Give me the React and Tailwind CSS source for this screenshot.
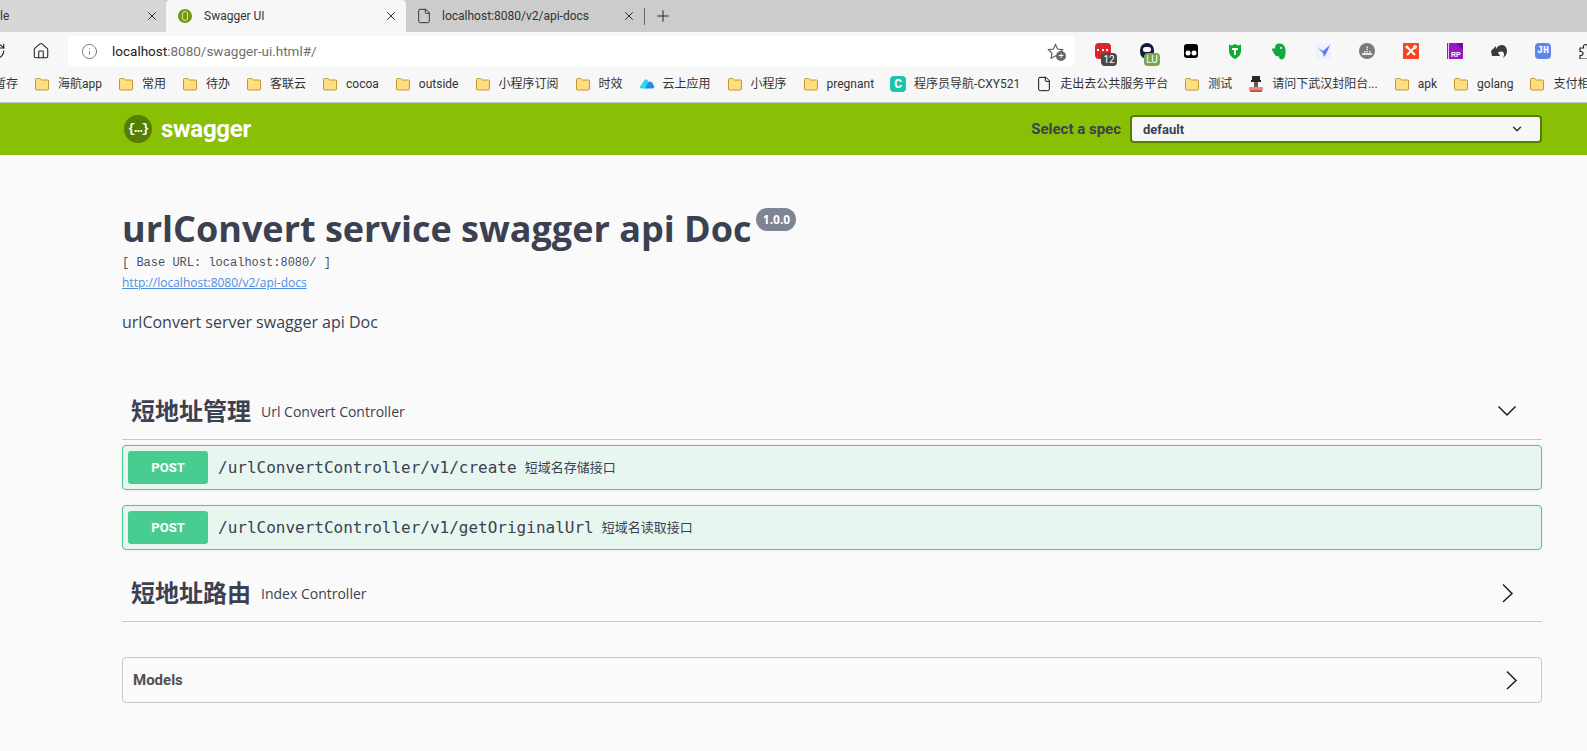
import { ChevronDown, File, Home, Info, Plus, RotateCw, X } from "lucide-react";

const bookmarks = [
  { label: "暂存", icon: "none" },
  { label: "海航app" },
  { label: "常用" },
  { label: "待办" },
  { label: "客联云" },
  { label: "cocoa" },
  { label: "outside" },
  { label: "小程序订阅" },
  { label: "时效" },
  { label: "云上应用", icon: "cloud" },
  { label: "小程序" },
  { label: "pregnant" },
  { label: "程序员导航-CXY521", icon: "c" },
  { label: "走出去公共服务平台", icon: "doc" },
  { label: "测试" },
  { label: "请问下武汉封阳台...", icon: "stamp" },
  { label: "apk" },
  { label: "golang" },
  { label: "支付相关" },
];

function FolderIcon() {
  return (
    <svg width="16" height="16" viewBox="0 0 16 16" className="shrink-0">
      <path
        d="M1.5 3.5a1 1 0 0 1 1-1h3.2l1.6 1.5h6.2a1 1 0 0 1 1 1v8a1 1 0 0 1-1 1h-11a1 1 0 0 1-1-1z"
        fill="#ffdd82"
        stroke="#c4962c"
      />
    </svg>
  );
}

function BookmarkIcon({ type }) {
  if (type === "none") return null;
  if (type === "doc") return <File size={16} strokeWidth={1.4} className="shrink-0 text-black" />;
  if (type === "c") {
    return (
      <span className="flex h-4 w-4 shrink-0 items-center justify-center rounded bg-[#1fc4ad] text-[12px] font-bold text-white">
        C
      </span>
    );
  }
  if (type === "cloud") {
    return (
      <svg width="16" height="16" viewBox="0 0 16 16" className="shrink-0">
        <path d="M1 10.5 5.5 4c1-1 2-1 3 0l2 5-3 3.5H3c-2 0-2.6-1-2-2z" fill="#2fd8e8" />
        <path d="M6 12.5 9 6.500c1-1.500 3-1.500 4 0l2 3.500c.6 1.500-.4 2.500-1.500 2.500z" fill="#1f8cf0" />
      </svg>
    );
  }
  if (type === "stamp") {
    return (
      <svg width="16" height="18" viewBox="0 0 16 18" className="shrink-0">
        <rect x="4" y="1" width="8" height="4" fill="#2a2a2a" />
        <rect x="3" y="5" width="10" height="2" fill="#2a2a2a" />
        <rect x="6" y="7" width="4" height="5" fill="#6b5a50" />
        <rect x="1" y="12" width="14" height="3" rx="1" fill="#e98a8a" />
        <rect x="2" y="15" width="12" height="2" fill="#d84a4a" />
      </svg>
    );
  }
  return <FolderIcon />;
}

function ExtSlot({ children }) {
  return <div className="relative flex h-4 w-4 shrink-0 items-center justify-center">{children}</div>;
}

function ExtensionIcons() {
  return (
    <div className="flex items-center gap-7">
      <ExtSlot>
        <div className="h-4 w-4 rounded-sm bg-[#d9262c]">
          <span className="absolute left-[2px] top-[5px] h-[3px] w-[11px] border-b-2 border-dotted border-white" />
        </div>
        <span className="absolute left-[6px] top-[10px] flex h-[13px] w-4 items-center justify-center rounded-sm bg-[#4a4a4a] text-[10px] leading-none text-white">
          12
        </span>
      </ExtSlot>
      <ExtSlot>
        <div className="h-4 w-[14px] rounded-full bg-[#14203a]">
          <span className="absolute left-[4px] top-[4px] h-[5px] w-2 rounded-full bg-white" />
        </div>
        <span className="absolute left-[5px] top-[10px] flex h-[13px] w-4 items-center justify-center rounded-sm bg-[#76a74f] text-[10px] leading-none text-white">
          LU
        </span>
      </ExtSlot>
      <ExtSlot>
        <svg width="14" height="14" viewBox="0 0 14 14">
          <rect width="14" height="14" rx="3" fill="#000" />
          <circle cx="4" cy="9" r="2.500" fill="#fff" />
          <circle cx="10" cy="9" r="2.500" fill="#fff" />
        </svg>
      </ExtSlot>
      <ExtSlot>
        <svg width="14" height="16" viewBox="0 0 14 16">
          <path d="M1 1.500 4 2.500 7 1l3 1.500 3-1v6.500C13 12 10 14.500 7 16 4 14.500 1 12 1 8z" fill="#0db02b" />
          <path d="M4 5h6v2H8v5H6V7H4z" fill="#fff" />
        </svg>
      </ExtSlot>
      <ExtSlot>
        <svg width="14" height="17" viewBox="0 0 14 17">
          <path d="M3.500 2C5 .3 9 0 11 1.500c2 1.500 3 5 2.500 9-.3 3-1.500 6-4 6-2 0-2.800-1.500-2.200-3.200-2 .6-4-.3-5.300-2.800C1 9 0 7 0 5.500h3z" fill="#12a745" />
          <circle cx="9" cy="5" r="1" fill="#fff" />
        </svg>
      </ExtSlot>
      <ExtSlot>
        <svg width="15" height="16" viewBox="0 0 15 16">
          <rect width="15" height="16" rx="2" fill="#eef1fd" />
          <path d="M2 5 7 8 14 2 11 9 8 14 7 10z" fill="#5b7cf0" />
        </svg>
      </ExtSlot>
      <ExtSlot>
        <svg width="16" height="16" viewBox="0 0 16 16">
          <circle cx="8" cy="8" r="8" fill="#7b7b7b" />
          <path d="M3 10h10v2H3zM5 8h1.500v1.500H5zM7.500 8H9v1.500H7.500zM10 8h1.500v1.500H10zM7.500 5.500H9V7H7.500zM7.500 3.500H9V5H7.500z" fill="#e8e8e8" />
        </svg>
      </ExtSlot>
      <ExtSlot>
        <svg width="16" height="16" viewBox="0 0 16 16">
          <rect width="16" height="16" fill="#f5461f" />
          <path d="M4 12 12 4M4 4l8 8" stroke="#fff" strokeWidth="2" />
          <circle cx="12" cy="4" r="2" fill="#fff" />
          <circle cx="4" cy="4" r="1.500" fill="#fff" />
        </svg>
      </ExtSlot>
      <ExtSlot>
        <svg width="16" height="16" viewBox="0 0 16 16">
          <rect width="16" height="16" fill="#9a17c4" />
          <path d="M9 0h7v7z" fill="#6d0e9c" />
          <rect x="1" width="1" height="16" fill="#e8c8f5" />
          <text x="4" y="14" fontSize="7" fontWeight="700" fill="#fff" fontFamily="Liberation Sans">RP</text>
        </svg>
      </ExtSlot>
      <ExtSlot>
        <svg width="16" height="15" viewBox="0 0 16 15">
          <path d="M0 7 5 2v3c1-2 3-4 6-4 3 0 5 3 5 6 0 3-1.500 5-4 7 1-2 1.500-4 .5-5.500C11.500 7 9 7 7 8.500L9 12H1z" fill="#3b3b3b" />
        </svg>
      </ExtSlot>
      <span className="flex h-4 w-4 shrink-0 items-center justify-center rounded-sm bg-[#5c86ee] font-['Liberation_Mono',monospace] text-[10px] font-bold leading-none text-white">
        JH
      </span>
      <svg width="16" height="16" viewBox="0 0 16 16" fill="none" stroke="#222" strokeWidth="1.200" className="shrink-0">
        <path d="M1 5h3.500V3.500a2 2 0 0 1 4 0V5H12v3.500h1.500a2 2 0 0 1 0 4H12V16H1v-3.500h1a2 2 0 0 0 0-4H1z" />
      </svg>
    </div>
  );
}

function Tab({ className, icon, title }) {
  return (
    <div className={`flex h-8 items-center rounded-t ${className}`}>
      {icon}
      <span className="truncate text-[12px] text-[#333]">{title}</span>
      <X size={14} strokeWidth={1.600} className="ml-auto shrink-0 text-[#222]" />
    </div>
  );
}

function BrowserChrome() {
  return (
    <div className="font-['Roboto','Noto_Sans_CJK_SC',sans-serif]">
      <div className="flex h-8 items-center overflow-hidden bg-[#cccccc]">
        <Tab className="w-[166px] justify-start bg-[#d6d6d6] pr-[7px]" title="le" />
        <Tab
          className="w-[240px] bg-[#f7f7f7] pl-3 pr-[8px]"
          icon={
            <span className="mr-3 flex h-[14px] w-[14px] shrink-0 items-center justify-center rounded-full bg-[#6f9a12]">
              <span className="h-[10px] w-[6px] rounded-full border border-[#d8e6b8]" />
            </span>
          }
          title="Swagger UI"
        />
        <Tab
          className="w-[234px] pl-[10px] pr-[4px]"
          icon={<File size={16} strokeWidth={1.300} className="mr-[10px] shrink-0 text-[#222]" />}
          title="localhost:8080/v2/api-docs"
        />
        <span className="ml-[4px] h-[17px] w-px bg-[#666]" />
        <Plus size={18} strokeWidth={1.300} className="ml-[9px] text-[#222]" />
      </div>

      <div className="flex h-[34px] items-center overflow-hidden bg-[#f7f7f7] pt-[4px]">
        <RotateCw size={18} strokeWidth={1.500} className="-ml-[12px] shrink-0 text-[#222]" />
        <Home size={18} strokeWidth={1.400} className="ml-[26px] shrink-0 text-[#222]" />
        <div className="ml-[18px] flex h-[30px] w-[1007px] shrink-0 items-center rounded bg-white pl-[13px] pr-[12px]">
          <Info size={17} strokeWidth={1.200} className="shrink-0 text-[#666]" />
          <span className="ml-[14px] text-[13.500px] text-[#222]">
            localhost<span className="text-[#6e6e6e]">:8080/swagger-ui.html#/</span>
          </span>
          <span className="relative ml-auto h-4 w-4">
            <svg width="17" height="17" viewBox="0 0 24 24" fill="none" stroke="#555" strokeWidth="1.500">
              <path d="M12 2l3 6.500 7 1-5 5 1.200 7L12 18l-6.200 3.500L7 14.500l-5-5 7-1z" />
            </svg>
            <span className="absolute left-[9px] top-[8px] flex h-[10px] w-[10px] items-center justify-center rounded-full bg-[#666] text-[9px] leading-none text-white">
              +
            </span>
          </span>
        </div>
        <div className="ml-[20px] shrink-0">
          <ExtensionIcons />
        </div>
      </div>

      <div className="flex h-[37px] items-center gap-4 overflow-hidden border-b border-[#c6c6c6] bg-[#f7f7f7]">
        {bookmarks.map((b, i) => (
          <div key={b.label} className={`flex shrink-0 items-center gap-2 ${i === 0 ? "-ml-[6px]" : ""}`}>
            <BookmarkIcon type={b.icon} />
            <span className="whitespace-nowrap text-[12px] leading-4 text-[#333]">{b.label}</span>
          </div>
        ))}
      </div>
    </div>
  );
}

function SwaggerBar() {
  return (
    <div className="flex h-[52px] items-center bg-[#89bf04] pl-[124px] pr-[45px] font-['Roboto','Noto_Sans',sans-serif]">
      <span className="flex h-7 w-7 items-center justify-center rounded-full bg-[#547f00] font-['Liberation_Mono',monospace] text-[13px] font-bold tracking-[-1px] text-white">
        {"{…}"}
      </span>
      <span className="ml-[9px] text-[24px] font-bold leading-none tracking-[-0.3px] text-white">swagger</span>
      <span className="ml-auto text-[15px] font-bold text-[#3b4151]">Select a spec</span>
      <div className="ml-[9px] flex h-[28px] w-[412px] items-center justify-between rounded border-2 border-[#547f00] bg-[#f7f7f7] pl-[11px] pr-[16px]">
        <span className="pt-px text-[13px] font-bold text-[#3b4151]">default</span>
        <ChevronDown size={14} strokeWidth={2.500} className="text-[#333]" />
      </div>
    </div>
  );
}

function TagHeader({ name, desc, open }) {
  return (
    <div className="flex h-[57px] items-center border-b border-[#c8c8cb] pl-[9px] pr-[26px]">
      <h3 className="text-[24px] font-bold leading-none text-[#3b4151]">{name}</h3>
      <span className="ml-[10px] text-[14px] text-[#3b4151]">{desc}</span>
      <span className="ml-auto">
        {open ? (
          <svg width="20" height="20" viewBox="0 0 20 20" fill="none" stroke="#1f1f1f" strokeWidth="1.500" className="-mr-[1px]">
            <path d="M1.500 5.500 10 14l8.500-8.500" />
          </svg>
        ) : (
          <svg width="20" height="20" viewBox="0 0 20 20" fill="none" stroke="#1f1f1f" strokeWidth="1.500" className="-mr-[1px]">
            <path d="M6 1.500 15 10.500 6 19" />
          </svg>
        )}
      </span>
    </div>
  );
}

function PostRow({ path, desc, className }) {
  return (
    <div className={`flex h-[45px] items-center rounded border border-[#49cc90] bg-[#e8f6f0] pl-[5px] shadow-[0_0_3px_rgba(0,0,0,0.08)] ${className}`}>
      <span className="flex h-[33px] w-[80px] items-center justify-center rounded-[3px] bg-[#49cc90] font-['Roboto',sans-serif] text-[13px] font-bold text-white">
        POST
      </span>
      <span className="ml-[10px] font-['DejaVu_Sans_Mono',monospace] text-[16px] leading-none text-[#3b4151]">{path}</span>
      <span className="ml-[8px] text-[13px] text-[#3b4151]">{desc}</span>
    </div>
  );
}

export default function App() {
  return (
    <div className="h-[751px] overflow-hidden bg-[#fafafa] font-['Open_Sans','Noto_Sans_CJK_SC',sans-serif]">
      <BrowserChrome />
      <SwaggerBar />

      <main className="ml-[122px] mr-[45px]">
        <section className="pt-[52px]">
          <div className="flex items-start">
            <h2 className="text-[36px] font-bold leading-[44px] text-[#3b4151]">urlConvert service swagger api Doc</h2>
            <span className="ml-[5px] mt-[1px] flex h-[23px] w-[40px] items-center justify-center rounded-full bg-[#7d8492] text-[12px] font-bold text-white">
              1.0.0
            </span>
          </div>
          <p className="mt-[4px] font-['Liberation_Mono',monospace] text-[12px] leading-4 text-[#4a5060]">
            [ Base URL: localhost:8080/ ]
          </p>
          <a className="mt-[4px] block text-[12px] leading-4 text-[#4990e2] underline">http://localhost:8080/v2/api-docs</a>
          <p className="mt-[20px] text-[16px] leading-[22px] text-[#3b4151]">urlConvert server swagger api Doc</p>
        </section>

        <section className="mt-[50px]">
          <TagHeader name="短地址管理" desc="Url Convert Controller" open />
          <PostRow className="mt-[5px]" path="/urlConvertController/v1/create" desc="短域名存储接口" />
          <PostRow className="mt-[15px]" path="/urlConvertController/v1/getOriginalUrl" desc="短域名读取接口" />
          <div className="mt-[15px]">
            <TagHeader name="短地址路由" desc="Index Controller" />
          </div>
        </section>

        <div className="mt-[35px] flex h-[46px] items-center justify-between rounded border border-[#c8c8cb] pl-[10px] pr-[20px]">
          <span className="font-['Roboto',sans-serif] text-[15px] font-bold text-[#505050]">Models</span>
          <svg width="20" height="20" viewBox="0 0 20 20" fill="none" stroke="#1f1f1f" strokeWidth="1.500">
            <path d="M6 1.500 15 10.500 6 19" />
          </svg>
        </div>
      </main>
    </div>
  );
}
